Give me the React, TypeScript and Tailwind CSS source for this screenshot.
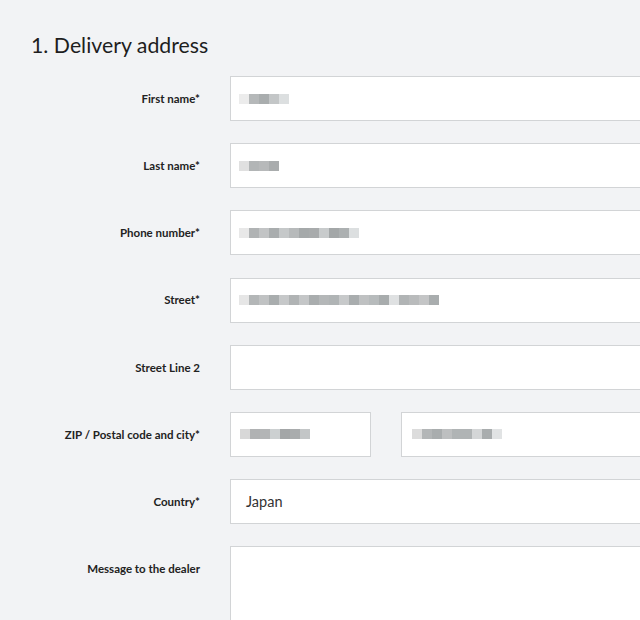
import React from "react";

const font = { fontFamily: "Lato, 'Open Sans', sans-serif" };

function Pixels({ cells, left = 8 }: { cells: string[]; left?: number }) {
  return (
    <div className="flex h-[10px]" style={{ marginLeft: left }}>
      {cells.map((c, i) => (
        <div key={i} className="h-[10px] w-[10px]" style={{ backgroundColor: c }} />
      ))}
    </div>
  );
}

function Box({ children, className = "" }: { children?: React.ReactNode; className?: string }) {
  return (
    <div className={`flex h-[45px] items-center border border-[#d2d4d6] bg-white ${className}`}>
      {children}
    </div>
  );
}

function Row({ label, children }: { label: string; children: React.ReactNode }) {
  return (
    <div className="flex items-center">
      <div className="w-[200px] shrink-0 text-right text-[11.5px] font-bold text-[#222]">{label}</div>
      <div className="ml-[30px] flex-1">{children}</div>
    </div>
  );
}

export default function App() {
  return (
    <div className="h-[620px] w-[640px] overflow-hidden bg-[#f2f3f5]" style={font}>
      <h1 className="pl-[31px] pt-[32px] text-[21.3px] leading-[26px] text-[#1e1e1e]">1. Delivery address</h1>
      <div className="mt-[18px] flex w-[720px] flex-col gap-[22.2px]">
        <Row label="First name*">
          <Box>
            <Pixels cells={["#ececec", "#b5b8b9", "#a9adae", "#c3c6c7", "#dcdfe0"]} />
          </Box>
        </Row>
        <Row label="Last name*">
          <Box>
            <Pixels cells={["#e0e0e0", "#b2b5b6", "#b7b9ba", "#a9acad"]} />
          </Box>
        </Row>
        <Row label="Phone number*">
          <Box>
            <Pixels
              cells={["#e8e8e8", "#b0b3b4", "#c2c4c5", "#a9adae", "#c5c8c9", "#b7babb", "#a5a9aa", "#a8abac", "#c8cbcc", "#a3a7a8", "#acb0b1", "#dcdfe0"]}
            />
          </Box>
        </Row>
        <Row label="Street*">
          <Box>
            <Pixels
              cells={[
                "#e6e6e6", "#b3b6b7", "#c0c2c3", "#a9adae", "#c6c8c9", "#b0b3b4", "#c4c6c7", "#a9adae", "#b4b7b8", "#b0b4b5",
                "#c7c9ca", "#a9adae", "#bfc1c2", "#b7bbbc", "#a8acad", "#dfe1e2", "#b1b4b5", "#b9bbbc", "#c4c5c6", "#a9adae",
              ]}
            />
          </Box>
        </Row>
        <Row label="Street Line 2">
          <Box />
        </Row>
        <Row label="ZIP / Postal code and city*">
          <div className="flex gap-[30px]">
            <Box className="w-[141px]">
              <Pixels left={9} cells={["#d8d8d8", "#b0b2b3", "#b3b5b6", "#ccd0d1", "#a3a6a7", "#a9acad", "#c3c6c7"]} />
            </Box>
            <Box className="flex-1">
              <Pixels left={10} cells={["#dcdcdc", "#b3b6b7", "#a9adae", "#bdbfc0", "#b0b4b5", "#b0b4b5", "#d4d6d7", "#a9adae", "#e1e3e4"]} />
            </Box>
          </div>
        </Row>
        <Row label="Country*">
          <Box>
            <span className="pl-[15px] text-[14.5px] text-[#333]">Japan</span>
          </Box>
        </Row>
        <div className="flex items-start">
          <div className="w-[200px] shrink-0 pt-[14px] text-right text-[11.5px] font-bold text-[#222]">Message to the dealer</div>
          <div className="ml-[30px] h-[140px] flex-1 border border-[#d2d4d6] bg-white" />
        </div>
      </div>
    </div>
  );
}
